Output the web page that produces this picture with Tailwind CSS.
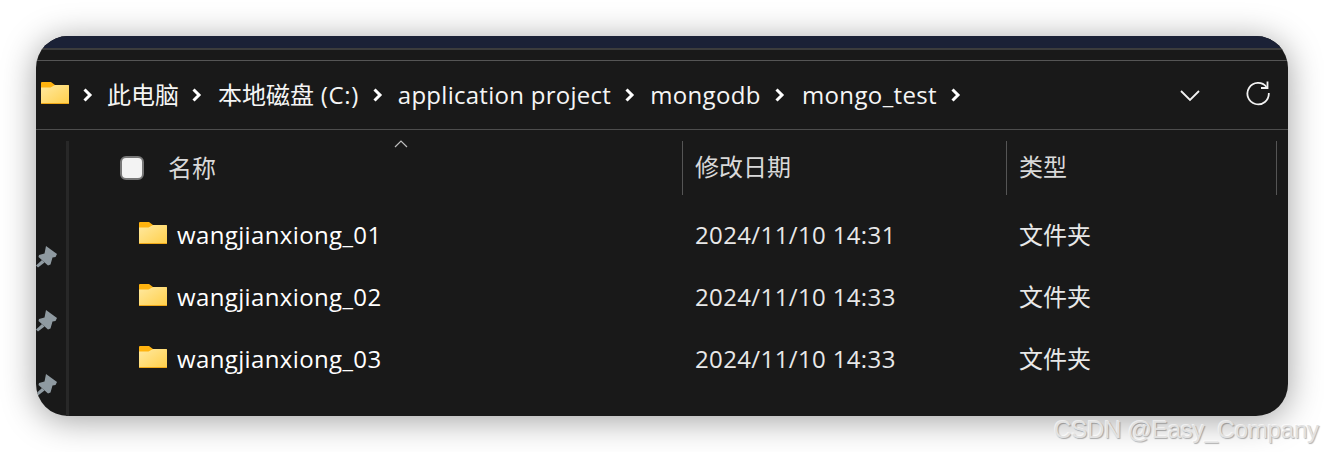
<!DOCTYPE html>
<html>
<head>
<meta charset="utf-8">
<script src="https://cdn.jsdelivr.net/npm/@tailwindcss/browser@4"></script>
</head>
<body class="bg-white">
<svg width="0" height="0" class="absolute">
  <defs>
    <linearGradient id="fg" x1="0" y1="0" x2="1" y2="1"><stop offset="0" stop-color="#ffe9a0"/><stop offset="1" stop-color="#ffcf4a"/></linearGradient>
    <symbol id="folder" viewBox="0 0 28 22">
      <path d="M1 0h9l4 3h13a1 1 0 0 1 1 1v6H0V1a1 1 0 0 1 1-1z" fill="#ffb30f"/>
      <path d="M0 5.500h9.500L14 3h13a1 1 0 0 1 1 1v17a1 1 0 0 1-1 1H1a1 1 0 0 1-1-1z" fill="url(#fg)"/>
      <path d="M0 21h28v.2a.8.8 0 0 1-.8.8H.8a.8.8 0 0 1-.8-.8z" fill="#f0a818"/>
    </symbol>
    <symbol id="pin" viewBox="0 0 22 22">
      <path d="M10 0L21 8l-1.500 3-3 .5-2 7-2.500 1L2.500 11 3 9l5.500-1.500z" fill="#8f9aa1"/>
      <path d="M6 14L0 19.500l2 2L8.500 16.500z" fill="#8f9aa1"/>
    </symbol>
    <symbol id="chev" viewBox="0 0 10 14">
      <path d="M1.500 1.500l5.500 5.500-5.500 5.500" fill="none" stroke="#fff" stroke-width="3"/>
    </symbol>
  </defs>
</svg>
<div class="relative w-[1324px] h-[452px] overflow-hidden bg-white pt-[36px] pl-[36px] font-['Open_Sans','Noto_Sans_CJK_SC',sans-serif]">
  <div class="w-[1252px] h-[380px] rounded-[32px] overflow-hidden bg-[#191919] shadow-[0_4px_34px_rgba(0,0,0,0.38)] flex flex-col">
    <div class="h-[12px] shrink-0 bg-[#1b2136]"></div>
    <div class="h-[2px] shrink-0 bg-[#3c3c3c]"></div>
    <div class="h-[11px] shrink-0 border-b border-[#555555]"></div>
    <div class="h-[69px] shrink-0 border-b border-[#4d4d4d] flex items-center pl-[5px] text-[24px] text-[#f5f5f5] tracking-[0.27px]">
      <svg class="w-[28px] h-[22px] mt-[-4px]"><use href="#folder"/></svg>
      <svg class="w-[10px] h-[14px] ml-[14px]"><use href="#chev"/></svg>
      <span class="ml-[14px] tracking-normal">此电脑</span>
      <svg class="w-[10px] h-[14px] ml-[13px]"><use href="#chev"/></svg>
      <span class="ml-[16px] tracking-normal">本地磁盘<span class="tracking-[0.6px]"> (C:)</span></span>
      <svg class="w-[10px] h-[14px] ml-[14px]"><use href="#chev"/></svg>
      <span class="ml-[15px]">application project</span>
      <svg class="w-[10px] h-[14px] ml-[14px]"><use href="#chev"/></svg>
      <span class="ml-[15px] tracking-[0.37px]">mongodb</span>
      <svg class="w-[10px] h-[14px] ml-[14px]"><use href="#chev"/></svg>
      <span class="ml-[17px] tracking-[0.37px]">mongo_test</span>
      <svg class="w-[10px] h-[14px] ml-[14px]"><use href="#chev"/></svg>
      <svg class="w-[22px] h-[14px] ml-auto" viewBox="0 0 22 14"><path d="M2 3l9 9 9-9" fill="none" stroke="#f2f2f2" stroke-width="1.800"/></svg>
      <svg class="w-[26px] h-[26px] ml-[44px] mr-[17px] mt-[-4px]" viewBox="0 0 26 26"><path d="M21.500 7A10.700 10.700 0 1 0 23.800 13" fill="none" stroke="#f2f2f2" stroke-width="1.800"/><path d="M22.500 1.500V8H16" fill="none" stroke="#f2f2f2" stroke-width="1.800"/></svg>
    </div>
    <div class="flex-1 flex min-h-0">
      <div class="w-[30px] shrink-0 pt-[116px] flex flex-col gap-[42px]">
        <svg class="w-[22px] h-[22px] shrink-0"><use href="#pin"/></svg>
        <svg class="w-[22px] h-[22px] shrink-0"><use href="#pin"/></svg>
        <svg class="w-[22px] h-[22px] shrink-0"><use href="#pin"/></svg>
      </div>
      <div class="mt-[11px] w-[3px] shrink-0 bg-[#282828]"></div>
      <div class="flex-1 relative">
        <div class="flex h-[54px] mt-[11px] text-[24px] text-[#d9d9d9] leading-[52px]">
          <div class="w-[614px] shrink-0 relative flex items-center pl-[51px] border-r border-[#555555]">
            <span class="w-[24px] h-[24px] rounded-[6px] bg-[#f3f3f3] border-2 border-[#777777]"></span>
            <span class="ml-[24px]">名称</span>
            <svg class="absolute left-[325px] top-[-1px] w-[14px] h-[8px]" viewBox="0 0 14 8"><path d="M1 7l6-6 6 6" fill="none" stroke="#bdbdbd" stroke-width="1.200"/></svg>
          </div>
          <div class="w-[324px] shrink-0 pl-[12px] border-r border-[#555555]">修改日期</div>
          <div class="w-[270px] shrink-0 pl-[12px] border-r border-[#555555]">类型</div>
        </div>
        <div class="flex flex-col mt-[9px] text-[24px] text-[#e8e8e8]">
          <div class="h-[62px] flex items-center">
            <div class="w-[613px] shrink-0 flex items-center pl-[70px] text-white tracking-[0.37px]"><svg class="w-[28px] h-[22px] mt-[-4px]"><use href="#folder"/></svg><span class="ml-[10px]">wangjianxiong_01</span></div>
            <div class="w-[324px] shrink-0 pl-[13px] tracking-[0.37px]">2024/11/10 14:31</div>
            <div class="pl-[13px]">文件夹</div>
          </div>
          <div class="h-[62px] flex items-center">
            <div class="w-[613px] shrink-0 flex items-center pl-[70px] text-white tracking-[0.37px]"><svg class="w-[28px] h-[22px] mt-[-4px]"><use href="#folder"/></svg><span class="ml-[10px]">wangjianxiong_02</span></div>
            <div class="w-[324px] shrink-0 pl-[13px] tracking-[0.37px]">2024/11/10 14:33</div>
            <div class="pl-[13px]">文件夹</div>
          </div>
          <div class="h-[62px] flex items-center">
            <div class="w-[613px] shrink-0 flex items-center pl-[70px] text-white tracking-[0.37px]"><svg class="w-[28px] h-[22px] mt-[-4px]"><use href="#folder"/></svg><span class="ml-[10px]">wangjianxiong_03</span></div>
            <div class="w-[324px] shrink-0 pl-[13px] tracking-[0.37px]">2024/11/10 14:33</div>
            <div class="pl-[13px]">文件夹</div>
          </div>
        </div>
      </div>
    </div>
  </div>
  <div class="absolute left-[1054px] top-[415px] font-['Liberation_Sans',sans-serif] text-[24px] tracking-[-0.2px] leading-[30px] whitespace-nowrap text-[#e2e2e2] [text-shadow:1px_1px_1px_rgba(0,0,0,0.3),-1px_-1px_0_rgba(255,255,255,0.6)]">CSDN @Easy_Company</div>
</div>
</body>
</html>
